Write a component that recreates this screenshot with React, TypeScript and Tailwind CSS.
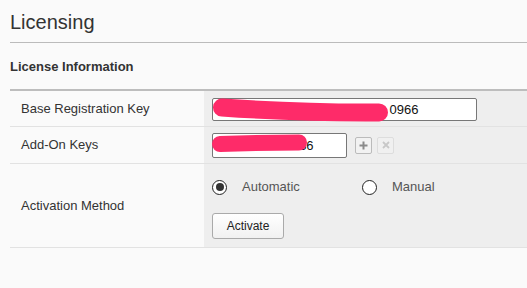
import { useState } from 'react';

type Row = {
  label: string;
  height: string;
  content: React.ReactNode;
};

function Redact({ d, w }: { d: string; w: number }) {
  return (
    <svg className="pointer-events-none absolute left-0 top-0 overflow-visible" width="1" height="1">
      <path d={d} stroke="#fe2b69" strokeWidth={w} strokeLinecap="round" fill="none" />
    </svg>
  );
}

function Radio({ checked, label, onClick }: { checked: boolean; label: string; onClick: () => void }) {
  return (
    <button type="button" onClick={onClick} className="flex items-center gap-[15px] w-[150px] h-[16px]">
      <span className="w-[15px] h-[15px] rounded-full border-[1.5px] border-[#222] bg-white flex items-center justify-center">
        {checked && <span className="w-[8px] h-[8px] rounded-full bg-[#333]" />}
      </span>
      <span className="text-[13px] text-[#555]">{label}</span>
    </button>
  );
}

export default function App() {
  const [method, setMethod] = useState<'auto' | 'manual'>('auto');

  const rows: Row[] = [
    {
      label: 'Base Registration Key',
      height: 'h-[36px]',
      content: (
        <div className="relative">
          <input
            readOnly
            value="0000000000000000000000    0966"
            className="w-[265px] h-[23px] pl-[3px] pr-[2px] border border-[#777] rounded-[2px] bg-white text-[13px] text-[#111] outline-none"
          />
          <Redact d="M10 10.5 Q90 16 167 15.5" w={18} />
        </div>
      ),
    },
    {
      label: 'Add-On Keys',
      height: 'h-[37px]',
      content: (
        <div className="flex items-center">
          <div className="relative">
            <input
              readOnly
              value="00000000000 36"
              className="w-[135px] h-[25px] pl-[3px] pr-[2px] border border-[#777] rounded-[2px] bg-white text-[13px] text-[#111] outline-none"
            />
            <Redact d="M8 11 Q45 9.5 87 9.5" w={16} />
          </div>
          <button className="ml-[8px] w-[17px] h-[17px] border border-[#bbb] rounded-[2px] bg-[#f2f2f2] flex items-center justify-center">
            <svg width="9" height="9" viewBox="0 0 9 9">
              <path d="M4.5 0.5v8M0.5 4.5h8" stroke="#8a8a8a" strokeWidth="2" />
            </svg>
          </button>
          <button disabled className="ml-[5px] w-[17px] h-[17px] border border-[#ddd] rounded-[2px] bg-[#f0f0f0] flex items-center justify-center">
            <svg width="8" height="8" viewBox="0 0 8 8">
              <path d="M1 1l6 6M7 1l-6 6" stroke="#c8c8c8" strokeWidth="1.8" />
            </svg>
          </button>
        </div>
      ),
    },
    {
      label: 'Activation Method',
      height: 'h-[84px]',
      content: (
        <div className="flex flex-col pt-[15px] pb-[8px]">
          <div className="flex items-center">
            <Radio checked={method === 'auto'} label="Automatic" onClick={() => setMethod('auto')} />
            <Radio checked={method === 'manual'} label="Manual" onClick={() => setMethod('manual')} />
          </div>
          <button className="mt-[18px] w-[72px] h-[26px] border border-[#aaa] rounded-[3px] bg-gradient-to-b from-white to-[#f1f1f1] text-[12px] text-[#222]">
            Activate
          </button>
        </div>
      ),
    },
  ];

  return (
    <div className="min-h-[288px] w-full bg-[#fafafa] pl-[10px] font-['Liberation_Sans',Arial,sans-serif] text-[#333]">
      <h1 className="pt-[10px] pb-[8px] text-[20px] leading-[24px] text-[#333] border-b border-[#bbb]">Licensing</h1>
      <div className="pt-[16px] pb-[14px] border-b-2 border-[#bdbdbd]">
        <h2 className="text-[13px] leading-[16px] font-bold text-[#333]">License Information</h2>
      </div>
      {rows.map((row) => (
        <div key={row.label} className={`grid grid-cols-[194px_1fr] border-b border-[#e2e2e2] ${row.height}`}>
          <div className="flex items-center pl-[11px] text-[13px] text-[#333]">{row.label}</div>
          <div className="flex items-center pl-[8px] bg-[#eeeeee]">{row.content}</div>
        </div>
      ))}
    </div>
  );
}
